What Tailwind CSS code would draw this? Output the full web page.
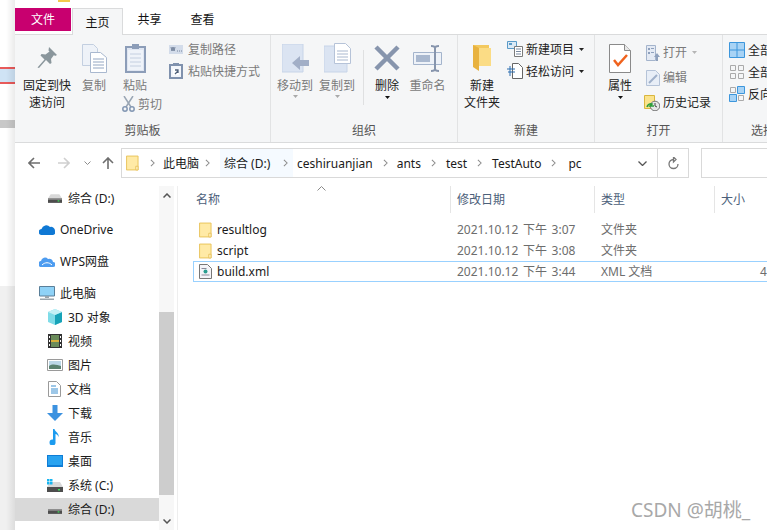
<!DOCTYPE html>
<html lang="zh-CN">
<head>
<meta charset="utf-8">
<title>pc</title>
<script src="https://cdn.jsdelivr.net/npm/@tailwindcss/browser@4"></script>
</head>
<body class="bg-white">
<svg class="hidden" width="0" height="0">
  <defs>
    <symbol id="folder" viewBox="0 0 14 16"><path d="M.5.5h12.5v15H.5z" fill="#fde692" stroke="#e8c25e"/><path d="M1.5 1.5h10.5v13H1.5z" fill="#ffeaa6"/><path d="M10.5 15.5v-4h2.5v4z" fill="#fff3c4" stroke="#e8c25e"/></symbol>
    <symbol id="drive" viewBox="0 0 16 10"><path d="M3 0h10l3 5H0z" fill="#d8d8d8"/><path d="M0 5h16v5H0z" fill="#4d4d4d"/><path d="M0 5h16v1.500H0z" fill="#8a8a8a"/><path d="M11 7h2v1.500h-2z" fill="#3ddc5a"/></symbol>
    <symbol id="arrow" viewBox="0 0 7 4"><path d="M0 0h7L3.500 4z" fill="currentColor"/></symbol>
    <symbol id="chev" viewBox="0 0 6 10"><path d="M1 1l4 4-4 4" fill="none" stroke="#8c8c8c" stroke-width="1.300"/></symbol>
  </defs>
</svg>
<div class="relative flex w-[767px] h-[530px] overflow-hidden bg-white text-[12px] leading-[17px] text-[#222] font-['Noto_Sans','Noto_Sans_CJK_SC',sans-serif]">
  <!-- background window strip -->
  <div class="relative flex flex-col w-[15px] shrink-0 h-full bg-white">
    <div class="h-[67px]"></div>
    <div class="h-[17px] border-y-2 border-[#e85a5a] bg-[#cfe3f5]"></div>
    <div class="h-[36px]"></div>
    <div class="h-[8px] bg-[#c8c8c8]"></div>
    <div class="h-[158px]"></div>
    <div class="flex-1 bg-[#f0f0f0]"></div>
    <div class="absolute inset-y-0 right-0 w-[9px] bg-gradient-to-r from-transparent to-black/8"></div>
  </div>

  <!-- explorer window -->
  <div class="flex flex-col flex-1 min-w-0 h-full">
    <div class="h-[8px] pl-[43px]"><div class="w-[12px] h-[2px] bg-[#f2c94c]"></div></div>

    <!-- tabs -->
    <div class="flex h-[27px] border-b border-[#dadbdc]">
      <div class="flex items-center justify-center w-[56px] h-[23px] bg-[#c8006f] text-white">文件</div>
      <div class="flex items-center justify-center w-[51px] h-[27px] ml-px bg-[#f5f6f7] border border-b-0 border-[#dadbdc] text-[#111]">主页</div>
      <div class="flex items-center justify-center w-[53px] h-[23px] text-[#111]">共享</div>
      <div class="flex items-center justify-center w-[53px] h-[23px] text-[#111]">查看</div>
    </div>

    <!-- ribbon -->
    <div class="flex h-[108px] bg-[#f5f6f7] border-b border-[#dadbdc] text-[#7a7a7a] overflow-hidden">

      <!-- 剪贴板 -->
      <div class="flex flex-col w-[256px] shrink-0 border-r border-[#e2e3e4]">
        <div class="flex h-[87px] pt-[6px]">
          <div class="flex flex-col items-center w-[64px]">
            <div class="flex items-center justify-center h-[34px]">
              <svg width="22" height="24" viewBox="0 0 22 24"><path d="M13 1l8 8-2 1-1-1-3 4 .5 4-1.500 1-4-4-7 8-1.500-.5 7-8-4-4 1-1.500 4 .5 4-3-1-1z" fill="#8a969c"/></svg>
            </div>
            <div class="h-[17px] mt-[2px] text-[#222]">固定到快</div>
            <div class="h-[17px] text-[#222]">速访问</div>
          </div>
          <div class="flex flex-col items-center w-[30px]">
            <div class="flex items-center justify-center h-[34px]">
              <svg width="25" height="29" viewBox="0 0 25 29"><path d="M.5.5h11l4 4v17H.5z" fill="#eef2f8" stroke="#c3cfe0"/><path d="M8.500 8.500h10l6 5v15h-16z" fill="#fff" stroke="#a9b8cf"/><path d="M11 15h11M11 18h11M11 21h11M11 24h11" stroke="#93a6c2"/></svg>
            </div>
            <div class="h-[17px] mt-[2px] whitespace-nowrap">复制</div>
          </div>
          <div class="flex flex-col w-[47px] ml-[6px]">
            <div class="flex flex-col items-center w-[40px]">
              <div class="flex items-center justify-center h-[34px]">
                <svg width="21" height="30" viewBox="0 0 21 30"><path d="M1 4h19v25H1z" fill="#dfe6f2" stroke="#8c9db8" stroke-width="2"/><path d="M3 7h15v20H3z" fill="#eff3f9"/><path d="M5 11h11M5 15h11M5 19h11M5 23h11" stroke="#c4cfe0"/><path d="M7 1h7v5H7z" fill="#8c9db8"/></svg>
              </div>
              <div class="h-[17px] mt-[2px]">粘贴</div>
            </div>
            <div class="flex items-center h-[20px] pl-[7px] gap-[3px] whitespace-nowrap">
              <svg width="13" height="16" viewBox="0 0 13 16"><path d="M2 0l7 11M11 0L4 11" stroke="#9aa6b4" stroke-width="1.500"/><circle cx="3" cy="13" r="2.200" fill="none" stroke="#8397b3" stroke-width="1.500"/><circle cx="10" cy="13" r="2.200" fill="none" stroke="#8397b3" stroke-width="1.500"/></svg>
              <span>剪切</span>
            </div>
          </div>
          <div class="flex flex-col ml-[7px] -mt-[3px] text-[#7a7a7a]">
            <div class="flex items-center h-[22px] gap-[5px] whitespace-nowrap">
              <svg width="14" height="9" viewBox="0 0 14 9"><path d="M0 0h14v9H0z" fill="#d3dcea"/><path d="M2 2l1 4 1-4 1 4 1-4M8 6h1M10 6h1M12 6h1" stroke="#60708a" fill="none" stroke-width=".8"/></svg>
              <span>复制路径</span>
            </div>
            <div class="flex items-center h-[22px] gap-[5px] whitespace-nowrap">
              <svg width="14" height="16" viewBox="0 0 14 16"><path d="M1 2h12v13H1z" fill="#f2f5fa" stroke="#7f91ad" stroke-width="2"/><path d="M4 0h6v3H4z" fill="#7f91ad"/><path d="M4 6h6v6H4z" fill="#fff"/><path d="M6 11l3-3M6 7h3v3" stroke="#4e5f78" fill="none" stroke-width="1.300"/></svg>
              <span>粘贴快捷方式</span>
            </div>
          </div>
        </div>
        <div class="h-[18px] text-center text-[#555]">剪贴板</div>
      </div>

      <!-- 组织 -->
      <div class="flex flex-col w-[187px] shrink-0 border-r border-[#e2e3e4]">
        <div class="flex h-[87px] pt-[6px]">
          <div class="flex flex-col items-center w-[42px] ml-[3px]">
            <div class="flex items-center justify-center h-[34px]">
              <svg width="27" height="29" viewBox="0 0 27 29"><path d="M0 0h21v28H0z" fill="#dbe4f2" stroke="#c7d4e8"/><path d="M10 19l8-7v4h9v6h-9v4z" fill="#a2afc7"/></svg>
            </div>
            <div class="h-[17px] mt-[2px] whitespace-nowrap">移动到</div>
            <svg class="mt-[1px] text-[#a9a9a9]" width="5" height="3"><use href="#arrow"/></svg>
          </div>
          <div class="flex flex-col items-center w-[42px]">
            <div class="flex items-center justify-center h-[34px]">
              <svg width="27" height="30" viewBox="0 0 27 30"><path d="M0 3h23v26H0z" fill="#dbe4f2" stroke="#c7d4e8"/><path d="M10.500.5h11l5 5v15h-16z" fill="#fff" stroke="#b6c3d8"/><path d="M13 8h11M13 11h11M13 14h11M13 17h11" stroke="#a9b8cf"/></svg>
            </div>
            <div class="h-[17px] mt-[2px] whitespace-nowrap">复制到</div>
            <svg class="mt-[1px] text-[#a9a9a9]" width="5" height="3"><use href="#arrow"/></svg>
          </div>
          <div class="w-px h-[55px] mt-[9px] ml-[5px] bg-[#dfe0e1]"></div>
          <div class="flex flex-col items-center w-[40px] ml-[3px]">
            <div class="flex items-center justify-center h-[34px]">
              <svg width="26" height="26" viewBox="0 0 26 26"><path d="M2 2l22 22M24 2L2 24" stroke="#8795ad" stroke-width="4.500"/></svg>
            </div>
            <div class="h-[17px] mt-[2px] text-[#222] whitespace-nowrap">删除</div>
            <svg class="mt-[2px] text-[#111]" width="5" height="3"><use href="#arrow"/></svg>
          </div>
          <div class="flex flex-col items-center w-[41px]">
            <div class="flex items-center justify-center h-[34px]">
              <svg width="29" height="27" viewBox="0 0 29 27"><path d="M.5 7.500h28v12H.5z" fill="#eef2f8" stroke="#a4b4cc"/><path d="M3 10h14v7H3z" fill="#a9b8cf"/><path d="M18 1c3 0 4 1 4 2v21c0 1-1 2-4 2M26 1c-3 0-4 1-4 2v21c0 1 1 2 4 2" fill="none" stroke="#8795ad" stroke-width="2"/></svg>
            </div>
            <div class="h-[17px] mt-[2px] whitespace-nowrap">重命名</div>
          </div>
        </div>
        <div class="h-[18px] text-center text-[#555]">组织</div>
      </div>

      <!-- 新建 -->
      <div class="flex flex-col w-[137px] shrink-0 border-r border-[#e2e3e4]">
        <div class="flex h-[87px] pt-[6px] text-[#222]">
          <div class="flex flex-col items-center w-[48px] whitespace-nowrap">
            <div class="flex items-center justify-center h-[34px]">
              <svg width="20" height="28" viewBox="0 0 20 28"><path d="M1 1h16v21H1z" fill="#f3c95f"/><path d="M1 1l6 3v23l-6-4z" fill="#e8b23f"/><path d="M7 4h12v18H7z" fill="#fbdc85"/></svg>
            </div>
            <div class="h-[17px] mt-[2px]">新建</div>
            <div class="h-[17px]">文件夹</div>
          </div>
          <div class="flex flex-col ml-[1px] -mt-[3px]">
            <div class="flex items-center h-[22px] whitespace-nowrap">
              <svg class="mr-[3px]" width="16" height="16" viewBox="0 0 16 16"><path d="M.5.5h9v7h-9z" fill="#dbeaf6" stroke="#5b9bc8"/><path d="M2 2h3v2H2z" fill="#5b9bc8"/><path d="M7.500 5.500h8v10h-8z" fill="#fff" stroke="#7a7a7a"/><path d="M9 8h5M9 10.500h5M9 13h5" stroke="#7a8aa0"/></svg>
              <span>新建项目</span>
              <svg class="ml-[5px] text-[#222]" width="5" height="3"><use href="#arrow"/></svg>
            </div>
            <div class="flex items-center h-[22px] whitespace-nowrap">
              <svg class="mr-[3px]" width="16" height="16" viewBox="0 0 16 16"><path d="M5.500.5h6l4 4v11h-10z" fill="#fff" stroke="#666"/><path d="M0 6h8M1 9h7" stroke="#2b6cb0" stroke-width="1.200"/><path d="M3 3v10" stroke="#2b6cb0"/></svg>
              <span>轻松访问</span>
              <svg class="ml-[5px] text-[#222]" width="5" height="3"><use href="#arrow"/></svg>
            </div>
          </div>
        </div>
        <div class="h-[18px] text-center text-[#555]">新建</div>
      </div>

      <!-- 打开 -->
      <div class="flex flex-col w-[128px] shrink-0 border-r border-[#e2e3e4]">
        <div class="flex h-[87px] pt-[6px]">
          <div class="flex flex-col items-center w-[50px] text-[#222]">
            <div class="flex items-center justify-center h-[34px]">
              <svg width="22" height="29" viewBox="0 0 22 29"><path d="M.5.5h15l6 6v22H.5z" fill="#fff" stroke="#8a8a8a"/><path d="M15.500.5v6h6" fill="#e8e8e8" stroke="#8a8a8a"/><path d="M5 16l4 5 9-10" fill="none" stroke="#f0631e" stroke-width="2.500"/></svg>
            </div>
            <div class="h-[17px] mt-[2px] whitespace-nowrap">属性</div>
            <svg class="mt-[2px] text-[#111]" width="5" height="3"><use href="#arrow"/></svg>
          </div>
          <div class="flex flex-col -ml-[1px] -mt-[1px]">
            <div class="flex items-center h-[25px] pl-[2px] whitespace-nowrap">
              <svg class="mr-[3px]" width="14" height="16" viewBox="0 0 14 16"><path d="M.5.500h9v15h-9z" fill="#e4eaf4" stroke="#a4b4cc"/><path d="M2 3h2v2H2zM2 7h2v2H2zM5 3h3v1H5zM5 7h3v1H5z" fill="#8ea0bc"/><path d="M11 8l3 4h-2v4h-2v-4H8z" fill="#8ea0bc"/></svg>
              <span>打开</span>
              <svg class="ml-[5px] text-[#b5b5b5]" width="5" height="3"><use href="#arrow"/></svg>
            </div>
            <div class="flex items-center h-[25px] pl-[2px] whitespace-nowrap">
              <svg class="mr-[3px]" width="14" height="16" viewBox="0 0 14 16"><path d="M.5.500h9l4 4v11H.5z" fill="#e8eef7" stroke="#b5c3d8"/><path d="M3 13l8-8" stroke="#9fb0ca" stroke-width="2"/></svg>
              <span>编辑</span>
            </div>
            <div class="flex items-center h-[25px] text-[#222] whitespace-nowrap">
              <svg class="mr-[3px]" width="16" height="16" viewBox="0 0 16 16"><path d="M.5.500h10v13H.5z" fill="#fbe38c" stroke="#d9b63e"/><circle cx="11" cy="11" r="4.800" fill="#e6e6e6" stroke="#777"/><path d="M11 8v3l2 1" stroke="#444" fill="none"/><path d="M3 12a4 4 0 0 1 5-3l-2 2h4" stroke="#2e9e3a" fill="none" stroke-width="1.500"/></svg>
              <span>历史记录</span>
            </div>
          </div>
        </div>
        <div class="h-[18px] text-center text-[#555]">打开</div>
      </div>

      <!-- 选择 -->
      <div class="flex flex-col flex-1 min-w-0 pl-[6px]">
        <div class="flex flex-col h-[87px] pt-[4px] text-[#222]">
          <div class="flex items-center h-[22px] gap-[3px] whitespace-nowrap">
            <svg class="shrink-0" width="16" height="16" viewBox="0 0 16 16"><path d="M.5.500h15v15H.5zM8 .5v15M.5 8h15" fill="#a8d3f5" stroke="#3c96dc"/></svg>
            <span>全部选择</span>
          </div>
          <div class="flex items-center h-[22px] gap-[3px] whitespace-nowrap">
            <svg class="shrink-0" width="16" height="16" viewBox="0 0 16 16"><path d="M1.500 1.500h5v5h-5zM9.500 1.500h5v5h-5zM1.500 9.500h5v5h-5zM9.500 9.500h5v5h-5z" fill="none" stroke="#aaa"/></svg>
            <span>全部取消</span>
          </div>
          <div class="flex items-center h-[22px] gap-[3px] whitespace-nowrap">
            <svg class="shrink-0" width="16" height="16" viewBox="0 0 16 16"><path d="M1.500 1.500h5v5h-5zM9.500 9.500h5v5h-5z" fill="none" stroke="#aaa"/><path d="M8.500.500h7v7h-7zM.5 8.500h7v7h-7z" fill="#a8d3f5" stroke="#3c96dc"/></svg>
            <span>反向选择</span>
          </div>
        </div>
        <div class="h-[18px] pl-[22px] text-[#555] whitespace-nowrap">选择</div>
      </div>
    </div>

    <!-- address row -->
    <div class="flex items-center h-[43px] shrink-0 pb-[3px]">
      <svg class="ml-[13px]" width="12" height="12" viewBox="0 0 12 12"><path d="M6 1L1 6l5 5M1 6h11" fill="none" stroke="#6e6e6e" stroke-width="1.600"/></svg>
      <svg class="ml-[18px]" width="12" height="12" viewBox="0 0 12 12"><path d="M6 1l5 5-5 5M11 6H0" fill="none" stroke="#cfcfcf" stroke-width="1.600"/></svg>
      <svg class="ml-[14px]" width="7" height="4" viewBox="0 0 7 4"><path d="M.5.500l3 3 3-3" fill="none" stroke="#8c8c8c"/></svg>
      <svg class="ml-[11px]" width="12" height="12" viewBox="0 0 12 12"><path d="M1 6l5-5 5 5M6 1v11" fill="none" stroke="#6e6e6e" stroke-width="1.600"/></svg>
      <div class="flex items-center w-[568px] h-[30px] ml-[7px] border border-[#d9d9d9] text-[#1a1a1a] whitespace-nowrap">
        <svg class="ml-[4px]" width="13" height="16"><use href="#folder"/></svg>
        <svg class="ml-[11px]" width="5" height="8"><use href="#chev"/></svg>
        <span class="ml-[8px] w-[37px]">此电脑</span>
        <svg class="ml-[5px]" width="5" height="8"><use href="#chev"/></svg>
        <span class="flex items-center h-full ml-[10px] pl-[4px] w-[57px] bg-[#f5faff]">综合 (D:)</span>
        <span class="flex items-center justify-center h-full w-[16px] bg-[#f5faff]"><svg width="5" height="8"><use href="#chev"/></svg></span>
        <span class="ml-[4px]">ceshiruanjian</span>
        <svg class="ml-[10px]" width="5" height="8"><use href="#chev"/></svg>
        <span class="ml-[9px]">ants</span>
        <svg class="ml-[10px]" width="5" height="8"><use href="#chev"/></svg>
        <span class="ml-[10px]">test</span>
        <svg class="ml-[10px]" width="5" height="8"><use href="#chev"/></svg>
        <span class="ml-[10px]">TestAuto</span>
        <svg class="ml-[10px]" width="5" height="8"><use href="#chev"/></svg>
        <span class="ml-[12px]">pc</span>
        <div class="flex-1"></div>
        <svg class="mr-[10px]" width="9" height="5" viewBox="0 0 9 5"><path d="M.5.500l4 4 4-4" fill="none" stroke="#555" stroke-width="1.300"/></svg>
        <div class="flex items-center justify-center w-[31px] h-full border-l border-[#d9d9d9]">
          <svg width="11" height="13" viewBox="0 0 11 13"><path d="M5.500 2.500a4.500 4.500 0 1 0 4.500 4.500M5.500 0v5L8 2.500z" fill="none" stroke="#777" stroke-width="1.300"/></svg>
        </div>
      </div>
      <div class="flex-1 h-[30px] ml-[12px] border-y border-l border-[#d9d9d9]"></div>
    </div>

    <!-- content -->
    <div class="flex flex-1 min-h-0">
      <!-- navigation -->
      <div class="flex flex-col w-[144px] shrink-0 text-[#1a1a1a] whitespace-nowrap">
        <div class="flex items-center h-[24px] pl-[33px] gap-[6px]"><svg width="14" height="9"><use href="#drive"/></svg><span>综合 (D:)</span></div>
        <div class="flex items-center h-[24px] mt-[7px] pl-[24px] gap-[5px]">
          <svg width="16" height="11" viewBox="0 0 16 11"><path d="M3 11a3 3 0 0 1-.5-6A5 5 0 0 1 11 3a4 4 0 0 1 5 4 3 3 0 0 1-2 4z" fill="#0f78d4"/></svg><span>OneDrive</span></div>
        <div class="flex items-center h-[24px] mt-[8px] pl-[24px] gap-[5px]">
          <svg width="16" height="11" viewBox="0 0 16 11"><path d="M3 11a3 3 0 0 1-1-6A4 4 0 0 1 9 3a3.500 3.500 0 0 1 5 3 2.500 2.500 0 0 1 0 5z" fill="#4d9cf0"/><path d="M3 9c3-3 7-3 10 0" stroke="#fff" fill="none"/></svg><span>WPS网盘</span></div>
        <div class="flex items-center h-[24px] mt-[8px] pl-[24px] gap-[5px]">
          <svg width="16" height="14" viewBox="0 0 16 14"><path d="M.5.500h15v9.500H.5z" fill="#8fd2f7" stroke="#5a7f99"/><path d="M6 10h4v2H6zM1 12.500h14V14H1z" fill="#9aa5ad"/></svg><span>此电脑</span></div>
        <div class="flex items-center h-[24px] pl-[32px] gap-[5px]">
          <svg width="16" height="16" viewBox="0 0 16 16"><path d="M8 0l7 3v10l-7 3-7-3V3z" fill="#7fdce8"/><path d="M8 6l7-3v10l-7 3z" fill="#17a3b8"/><path d="M8 6L1 3l7-3 7 3z" fill="#c4f1f6"/></svg><span>3D 对象</span></div>
        <div class="flex items-center h-[24px] pl-[32px] gap-[5px]">
          <svg width="16" height="14" viewBox="0 0 14 14"><path d="M0 0h14v14H0z" fill="#333"/><path d="M3 1h8v12H3z" fill="#6a8b5a"/><path d="M3 6h8v2H3z" fill="#d8b03a"/><path d="M1 2h1v2H1zM1 6h1v2H1zM1 10h1v2H1zM12 2h1v2h-1zM12 6h1v2h-1zM12 10h1v2h-1z" fill="#fff"/></svg><span>视频</span></div>
        <div class="flex items-center h-[24px] pl-[32px] gap-[5px]">
          <svg width="16" height="12" viewBox="0 0 16 12"><path d="M.5.500h15v11H.5z" fill="#fff" stroke="#9a9a9a"/><path d="M2 2h12v8H2z" fill="#bcd8e8"/><path d="M2 7c4-3 8-1 12 0v3H2z" fill="#5a8270"/></svg><span>图片</span></div>
        <div class="flex items-center h-[24px] pl-[33px] gap-[6px]">
          <svg width="13" height="16" viewBox="0 0 13 16"><path d="M.5.500h8l4 4v11H.5z" fill="#fff" stroke="#9a9a9a"/><path d="M3 5h5M3 8h7M3 10h7M3 12h7" stroke="#3a8fd0"/></svg><span>文档</span></div>
        <div class="flex items-center h-[24px] pl-[32px] gap-[5px]">
          <svg width="16" height="16" viewBox="0 0 16 16"><path d="M5.500 0h5v8H16l-8 8-8-8h5.500z" fill="#3c92e0"/></svg><span>下载</span></div>
        <div class="flex items-center h-[24px] pl-[34px] gap-[7px]">
          <svg width="12" height="16" viewBox="0 0 12 16"><path d="M4 0h1.500c.5 3 5 4 4 8-.5-2-2-3-3-3v8a3 3 0 1 1-2.500-2.500z" fill="#1c9bef"/></svg><span>音乐</span></div>
        <div class="flex items-center h-[24px] pl-[32px] gap-[5px]">
          <svg width="16" height="12" viewBox="0 0 16 12"><path d="M0 0h16v12H0z" fill="#0f7dd6"/><path d="M1 1h14v9H1z" fill="#29a3f0"/></svg><span>桌面</span></div>
        <div class="flex items-center h-[24px] pl-[32px] gap-[5px]">
          <svg width="16" height="13" viewBox="0 0 16 13"><path d="M3 3h10l3 5H0z" fill="#d8d8d8"/><path d="M0 8h16v5H0z" fill="#4d4d4d"/><path d="M11 10h2v1.500h-2z" fill="#3ddc5a"/><path d="M0 0h2.500v2.500H0zM3 0h2.500v2.500H3zM0 3h2.500v2.500H0zM3 3h2.500v2.500H3z" fill="#18b5f0"/></svg><span>系统 (C:)</span></div>
        <div class="flex items-center h-[23px] mt-[1px] pb-[1px] pl-[33px] gap-[6px] bg-[#d9d9d9]"><svg width="14" height="9"><use href="#drive"/></svg><span>综合 (D:)</span></div>
      </div>

      <!-- scrollbar -->
      <div class="flex flex-col w-[15px] shrink-0 bg-[#f7f7f7]">
        <div class="flex items-center justify-center h-[17px] mt-[1px]"><svg width="8" height="5" viewBox="0 0 8 5"><path d="M.5 4.500L4 1l3.500 3.500" fill="none" stroke="#555" stroke-width="1.500"/></svg></div>
        <div class="h-[108px]"></div>
        <div class="h-[183px] bg-[#cdcdcd]"></div>
        <div class="h-[18px]"></div>
        <div class="flex items-center justify-center h-[17px]"><svg width="8" height="5" viewBox="0 0 8 5"><path d="M.5.500L4 4l3.500-3.500" fill="none" stroke="#555" stroke-width="1.500"/></svg></div>
      </div>
      <div class="w-[4px] shrink-0 border-r border-[#eeeeee]"></div>

      <!-- file list -->
      <div class="relative flex flex-col flex-1 min-w-0 whitespace-nowrap">
        <svg class="absolute left-[139px] top-0" width="9" height="5" viewBox="0 0 9 5"><path d="M.5 4.500l4-4 4 4" fill="none" stroke="#8a8a8a"/></svg>
        <div class="flex h-[27px] text-[#4c607a]">
          <div class="w-[273px] pl-[18px] pt-[5px] border-r border-[#e5e5e5]">名称</div>
          <div class="w-[144px] pl-[6px] pt-[5px] border-r border-[#e5e5e5]">修改日期</div>
          <div class="w-[120px] pl-[6px] pt-[5px] border-r border-[#e5e5e5]">类型</div>
          <div class="pl-[6px] pt-[5px]">大小</div>
        </div>
        <div class="flex items-center h-[21px] mt-[6px] pl-[21px] text-[#6d6d6d]">
          <svg class="mr-[5px]" width="13" height="16"><use href="#folder"/></svg>
          <span class="w-[240px] text-[#1a1a1a]">resultlog</span>
          <span class="w-[144px] [word-spacing:1.5px]">2021.10.12 下午 3:07</span>
          <span>文件夹</span>
        </div>
        <div class="flex items-center h-[21px] pl-[21px] text-[#6d6d6d]">
          <svg class="mr-[5px]" width="13" height="16"><use href="#folder"/></svg>
          <span class="w-[240px] text-[#1a1a1a]">script</span>
          <span class="w-[144px] [word-spacing:1.5px]">2021.10.12 下午 3:08</span>
          <span>文件夹</span>
        </div>
        <div class="flex items-center h-[21px] ml-[15px] pl-[5px] border border-r-0 border-[#99d1ff] text-[#6d6d6d]">
          <svg class="mr-[5px]" width="13" height="15" viewBox="0 0 13 15"><path d="M.5.500h8l4 4v10H.5z" fill="#f4f4f8" stroke="#777"/><circle cx="6.500" cy="7.500" r="2" fill="#2a9d8f"/><path d="M2.500 4.500h5M2.500 11h8" stroke="#8a8a9a"/></svg>
          <span class="w-[240px] text-[#1a1a1a]">build.xml</span>
          <span class="w-[144px] [word-spacing:1.5px]">2021.10.12 下午 3:44</span>
          <span class="w-[159px]">XML 文档</span>
          <span>4</span>
        </div>
      </div>
    </div>
  </div>

  <div class="absolute left-[631px] top-[498px] text-[19px] leading-[24px] text-[#a8a8a8] whitespace-nowrap">CSDN @胡桃_</div>
</div>
</body>
</html>
